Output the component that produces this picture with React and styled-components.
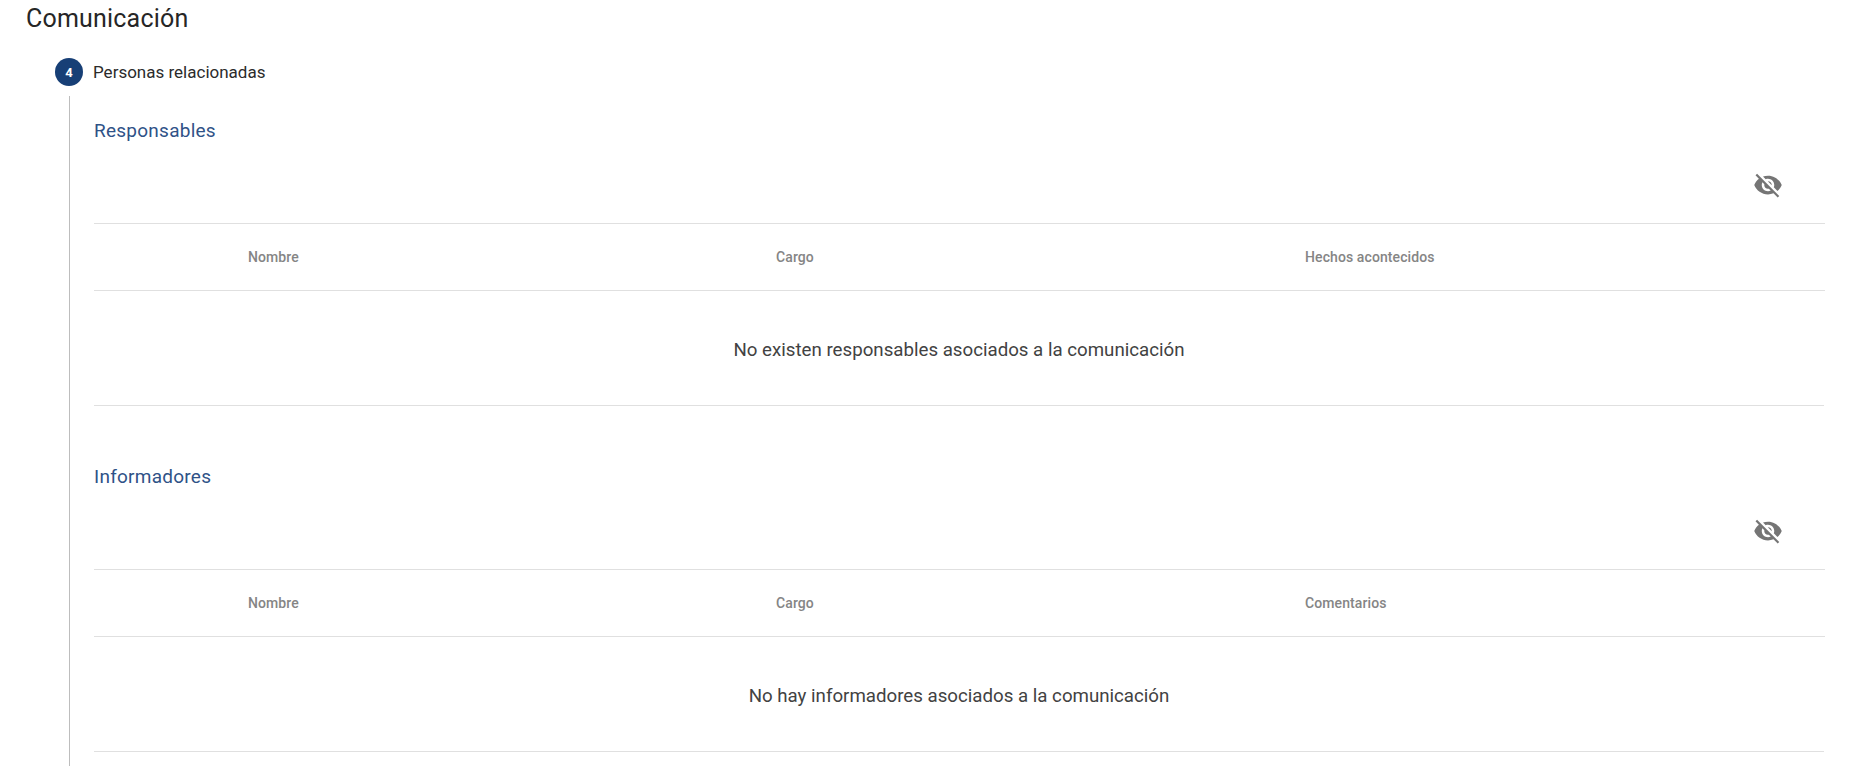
import React from "react";
import styled, { createGlobalStyle } from "styled-components";

const GlobalStyle = createGlobalStyle`
  html, body {
    margin: 0;
    padding: 0;
    height: 766px;
    overflow: hidden;
    background: #fff;
    font-family: Roboto, "Liberation Sans", sans-serif;
  }
`;

const Page = styled.div`
  height: 766px;
  overflow: hidden;
  padding: 0 48px 0 26px;
`;

const Title = styled.h1`
  margin: 0;
  padding-top: 4px;
  height: 50px;
  font-size: 25px;
  line-height: 30px;
  font-weight: 400;
  letter-spacing: 0.2px;
  color: #262626;
`;

const StepHeader = styled.div`
  display: flex;
  align-items: center;
  gap: 10px;
  margin-left: 29px;
  height: 28px;
  margin-top: 4px;
`;

const StepNumber = styled.div`
  width: 28px;
  height: 28px;
  border-radius: 50%;
  background: #173f76;
  color: #fff;
  font-size: 13px;
  font-weight: 700;
  display: flex;
  align-items: center;
  justify-content: center;
`;

const StepLabel = styled.div`
  font-size: 17px;
  font-weight: 400;
  color: #2b2b2b;
`;

const StepBody = styled.div`
  margin: 10px 0 0 43px;
  padding-left: 24px;
  border-left: 1px solid #bdbdbd;
`;

const Section = styled.section`
  padding-top: 23px;
  height: 323px;
`;

const SectionTitle = styled.h2`
  margin: 0;
  font-size: 19px;
  line-height: 24px;
  font-weight: 400;
  letter-spacing: 0.25px;
  color: #2f5287;
`;

const Toolbar = styled.div`
  height: 80px;
  display: flex;
  align-items: center;
  justify-content: flex-end;
  padding-right: 42px;
  padding-top: 3px;
  box-sizing: border-box;
  svg {
    display: block;
  }
`;

const HeadRow = styled.div`
  display: grid;
  grid-template-columns: 528px 529px 1fr;
  padding-left: 154px;
  height: 68px;
  align-items: center;
  box-sizing: border-box;
  border-top: 1px solid #e0e0e0;
  border-bottom: 1px solid #e0e0e0;
`;

const HeadCell = styled.div`
  font-size: 14px;
  font-weight: 500;
  letter-spacing: 0.1px;
  color: #858585;
`;

const EmptyRow = styled.div`
  height: 115px;
  margin-right: 1px;
  padding-top: 4px;
  box-sizing: border-box;
  border-bottom: 1px solid #e0e0e0;
  display: flex;
  align-items: center;
  justify-content: center;
  font-size: 18.7px;
  color: #424242;
`;

const EyeOffIcon = () => (
  <svg width="30" height="30" viewBox="0 0 24 24" fill="#757575" aria-hidden="true">
    <path d="M12 7c2.76 0 5 2.24 5 5 0 .65-.13 1.26-.36 1.83l2.92 2.92c1.51-1.26 2.7-2.89 3.43-4.75-1.73-4.39-6-7.5-11-7.5-1.4 0-2.74.25-3.98.7l2.16 2.16C10.74 7.13 11.35 7 12 7zM2 4.27l2.28 2.28.46.46C3.08 8.3 1.78 10.02 1 12c1.73 4.39 6 7.5 11 7.5 1.55 0 3.03-.3 4.38-.84l.42.42L19.73 22 21 20.73 3.27 3 2 4.27zM7.53 9.8l1.55 1.55c-.05.21-.08.43-.08.65 0 1.66 1.34 3 3 3 .22 0 .44-.03.65-.08l1.55 1.55c-.67.33-1.41.53-2.2.53-2.76 0-5-2.24-5-5 0-.79.2-1.53.53-2.2zm4.31-.78l3.15 3.15.02-.16c0-1.66-1.34-3-3-3l-.17.01z" />
  </svg>
);

const sections = [
  {
    title: "Responsables",
    columns: ["Nombre", "Cargo", "Hechos acontecidos"],
    empty: "No existen responsables asociados a la comunicación",
  },
  {
    title: "Informadores",
    columns: ["Nombre", "Cargo", "Comentarios"],
    empty: "No hay informadores asociados a la comunicación",
  },
];

const App = () => {
  return (
    <>
      <GlobalStyle />
      <Page>
        <Title>Comunicación</Title>
        <StepHeader>
          <StepNumber>4</StepNumber>
          <StepLabel>Personas relacionadas</StepLabel>
        </StepHeader>
        <StepBody>
          {sections.map((s) => (
            <Section key={s.title}>
              <SectionTitle>{s.title}</SectionTitle>
              <Toolbar>
                <EyeOffIcon />
              </Toolbar>
              <HeadRow>
                {s.columns.map((c) => (
                  <HeadCell key={c}>{c}</HeadCell>
                ))}
              </HeadRow>
              <EmptyRow>{s.empty}</EmptyRow>
            </Section>
          ))}
        </StepBody>
      </Page>
    </>
  );
};

export default App;
